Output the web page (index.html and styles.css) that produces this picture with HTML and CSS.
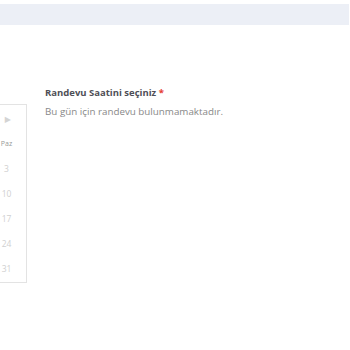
FILE: index.html
```html
<!DOCTYPE html>
<html lang="tr">
<head>
<meta charset="utf-8">
<link rel="stylesheet" href="styles.css">
</head>
<body>
<div class="topbar"></div>
<div class="main">
  <div class="calendar">
    <div class="cal-head">
      <span class="arrow">◀</span>
      <span class="month">Ekim 2021</span>
      <span class="arrow">▶</span>
    </div>
    <div class="grid weekdays">
      <span>Pzt</span><span>Sal</span><span>Çar</span><span>Per</span><span>Cum</span><span>Cmt</span><span>Paz</span>
    </div>
    <div class="grid days">
      <span></span><span></span><span></span><span></span><span>1</span><span>2</span><span>3</span>
      <span>4</span><span>5</span><span>6</span><span>7</span><span>8</span><span>9</span><span>10</span>
      <span>11</span><span>12</span><span>13</span><span>14</span><span>15</span><span>16</span><span>17</span>
      <span>18</span><span>19</span><span>20</span><span>21</span><span>22</span><span>23</span><span>24</span>
      <span>25</span><span>26</span><span>27</span><span>28</span><span>29</span><span>30</span><span>31</span>
    </div>
  </div>
  <div class="slots">
    <div class="label">Randevu Saatini seçiniz <span class="req">*</span></div>
    <div class="empty">Bu gün için randevu bulunmamaktadır.</div>
  </div>
</div>
</body>
</html>
```
FILE: styles.css
```css
html, body {
  margin: 0;
  padding: 0;
  background: #fff;
  font-family: "Open Sans", "DejaVu Sans", sans-serif;
}
.topbar {
  margin-top: 4px;
  height: 21px;
  width: 349px;
  background: #eceff6;
}
.main {
  display: flex;
  align-items: flex-start;
  margin-top: 79px;
}
.calendar {
  flex: none;
  width: 175px;
  margin-left: -156px;
  padding: 0 7px 0 0;
  border: 1px solid #e3e3e3;
  border-left: none;
  box-sizing: content-box;
  height: 177px;
}
.cal-head {
  height: 26px;
  display: flex;
  align-items: center;
  justify-content: space-between;
  padding-right: 8px;
  font-size: 8px;
  color: #d4d4d4;
}
.cal-head .month {
  font-size: 9px;
  color: #666;
}
.grid {
  display: grid;
  grid-template-columns: repeat(7, 25px);
}
.grid span {
  height: 25px;
  display: flex;
  align-items: center;
  justify-content: center;
}
.weekdays span {
  font-size: 7px;
  color: #999;
}
.days span {
  font-size: 8.5px;
  color: #d0d0d0;
}
.slots {
  margin-left: 18px;
  margin-top: -17px;
}
.label {
  font-size: 9.5px;
  font-weight: 700;
  color: #4f4f57;
  line-height: 12px;
}
.req {
  color: #e53935;
}
.empty {
  margin-top: 7px;
  font-size: 9.8px;
  color: #888;
  line-height: 12px;
}
```
